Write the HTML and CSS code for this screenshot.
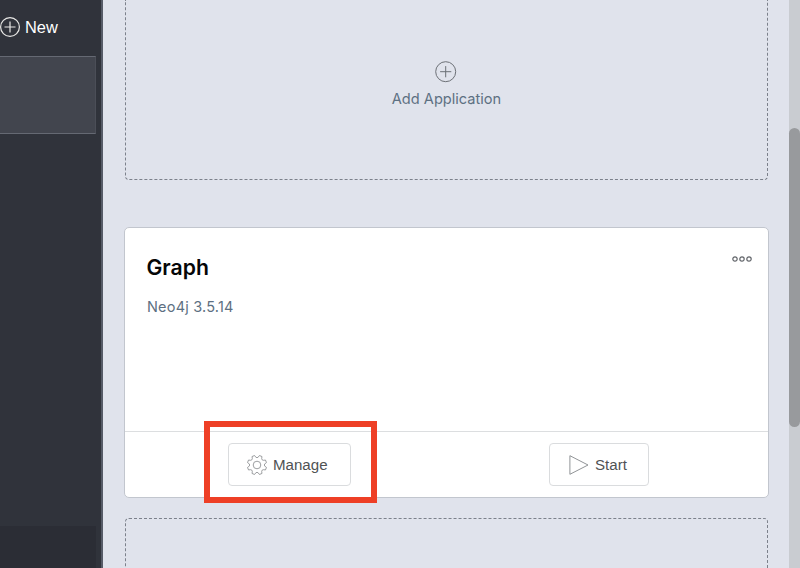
FILE: index.html
```html
<!DOCTYPE html>
<html lang="en">
<head>
<meta charset="utf-8">
<title>Project</title>
<link rel="stylesheet" href="styles.css">
</head>
<body>
<div class="app">
  <aside class="sidebar">
    <div class="new">
      <svg class="plus" viewBox="0 0 22 22"><circle cx="11" cy="11" r="9.4"/><path d="M11 5.5v11M5.5 11h11"/></svg>
      <span class="new-label">New</span>
    </div>
    <div class="selected"></div>
    <div class="sidebar-footer"></div>
  </aside>
  <main class="content">
    <section class="slot slot-top">
      <svg class="plus" viewBox="0 0 22 22"><circle cx="10.7" cy="10.7" r="10"/><path d="M10.7 5.1v11.2M5.1 10.7h11.2"/></svg>
      <span class="add-label">Add Application</span>
    </section>
    <section class="card">
      <div class="card-body">
        <div>
          <h2 class="title">Graph</h2>
          <p class="version">Neo4j 3.5.14</p>
        </div>
        <svg class="more" viewBox="0 0 22 8"><circle cx="4" cy="4" r="2.2"/><circle cx="11" cy="4" r="2.2"/><circle cx="18" cy="4" r="2.2"/></svg>
      </div>
      <div class="actions">
        <button class="btn manage">
          <svg class="gear" viewBox="-10 -10 20 20"><path d="M9.49 2.45L8.44 4.97Q3.6 3.6 4.97 8.44L2.45 9.49Q0 5.1-2.45 9.49L-4.97 8.44Q-3.6 3.6-8.44 4.97L-9.49 2.45Q-5.1 0-9.49-2.45L-8.44-4.97Q-3.6-3.6-4.97-8.44L-2.45-9.49Q0-5.1 2.45-9.49L4.97-8.44Q3.6-3.6 8.44-4.97L9.49-2.45Q5.1 0 9.49 2.45Z"/><circle r="3.8"/></svg>
          <span>Manage</span>
        </button>
        <button class="btn start">
          <svg class="play" viewBox="0 0 20 20"><path d="M.9.7v18.6L19 10z"/></svg>
          <span>Start</span>
        </button>
        <div class="highlight"></div>
      </div>
    </section>
    <section class="slot slot-bottom"></section>
  </main>
  <div class="scrollbar"><div class="thumb"></div></div>
</div>
</body>
</html>
```
FILE: styles.css
```css
* { box-sizing: border-box; }
body { margin: 0; font-family: "Liberation Sans", Arial, sans-serif; }
svg { display: block; flex: none; fill: none; stroke-linejoin: round; }
.app { display: flex; width: 800px; height: 568px; overflow: hidden; background: #e0e3ec; }

.sidebar { display: flex; flex-direction: column; width: 103px; background: #30333b; border-right: 2px solid #565b67; }
.new { display: flex; align-items: center; height: 56px; padding: 0 0 3px; color: #fff; }
.new .plus { width: 22px; height: 22px; margin-left: -1px; stroke: #e8e8e6; stroke-width: 1.2; }
.new-label { margin: 1px 0 0 4px; font-size: 16.4px; }
.selected { width: 96px; height: 78px; background: #42454e; border: 1px solid #656973; border-left: 0; border-right-color: #4b4e57; }
.sidebar-footer { width: 96px; height: 42px; margin-top: auto; background: #2b2d35; }

.content { width: 686px; height: 568px; padding: 0 20px 0 21px; }
.slot { width: 643px; margin-left: 1px; border: 1px dashed #7c818b; border-radius: 4px; }
.slot-top { display: flex; flex-direction: column; align-items: center; height: 180px; padding-top: 61px; border-top: 0; border-radius: 0 0 4px 4px; }
.slot-top .plus { width: 22px; height: 22px; margin-right: 1px; stroke: #6c7076; stroke-width: 1; }
.add-label { margin-top: 7px; font-family: Inter, sans-serif; font-size: 14.6px; line-height: 18px; color: #5d7082; }
.slot-bottom { height: 60px; margin-top: 20px; }

.card { width: 645px; height: 271px; margin-top: 47px; background: #fff; border: 1px solid #c2c6ce; border-radius: 5px; }
.card-body { display: flex; justify-content: space-between; height: 203px; padding: 25px 15px 0 21.5px; }
.title { margin: 0; font-family: Inter, sans-serif; font-size: 21.2px; font-weight: 600; line-height: 28px; color: #050607; }
.version { margin: 15px 0 0 .5px; font-family: Inter, sans-serif; font-size: 14.5px; letter-spacing: .2px; line-height: 22px; color: #5d7082; }
.more { width: 22px; height: 8px; margin-top: 2px; stroke: #63666b; stroke-width: 1.2; }
.actions { position: relative; display: grid; grid-template-columns: 1fr 1fr; align-items: start; height: 66px; padding-top: 11px; border-top: 1px solid #dcdee0; }
.btn { display: flex; align-items: center; height: 43px; padding: 0; background: #fff; border: 1px solid #dadcde; border-radius: 4px; font: 15.1px "Liberation Sans", Arial, sans-serif; color: #505254; }
.manage { width: 122.5px; margin-left: 103px; padding-left: 18px; gap: 6px; }
.start { width: 100px; margin-left: 102.5px; padding-left: 18.5px; gap: 6.5px; }
.gear { width: 20px; height: 20px; stroke: #929496; stroke-width: .9; }
.play { width: 20px; height: 20px; stroke: #85888b; stroke-width: .9; }
.highlight { position: absolute; left: 78.5px; top: -11px; width: 173px; height: 82px; border: 6px solid #ee3f26; }

.scrollbar { width: 11px; height: 568px; padding-top: 128px; background: #c9ccd1; }
.thumb { width: 11px; height: 299px; border-radius: 6px; background: #989a9d; }
```
